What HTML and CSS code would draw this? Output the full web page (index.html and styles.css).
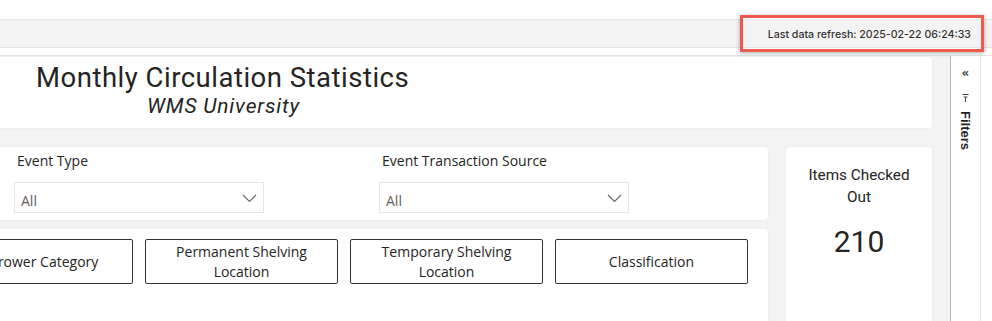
FILE: index.html
```html
<!DOCTYPE html>
<html>
<head>
  <title>Monthly Circulation Statistics</title>
  <link rel="stylesheet" href="styles.css">
</head>
<body>
  <div class="top-space"></div>

  <div class="refresh-bar">
    <div class="refresh-box">
      <span class="refresh-text">Last data refresh: 2025-02-22 06:24:33</span>
    </div>
  </div>

  <div class="workspace">
    <div class="canvas">
      <div class="card title-card">
        <h1 class="report-title">Monthly Circulation Statistics</h1>
        <p class="report-subtitle">WMS University</p>
      </div>

      <div class="canvas-row">
        <div class="left-col">
          <div class="card slicer-card">
            <div class="slicer">
              <div class="slicer-label">Event Type</div>
              <div class="dropdown">
                <span>All</span>
                <svg class="chevron" width="15" height="9" viewBox="0 0 15 9">
                  <path d="M1 1 L7.5 7.5 L14 1" fill="none" stroke="#666" stroke-width="1.1"/>
                </svg>
              </div>
            </div>
            <div class="slicer">
              <div class="slicer-label">Event Transaction Source</div>
              <div class="dropdown">
                <span>All</span>
                <svg class="chevron" width="15" height="9" viewBox="0 0 15 9">
                  <path d="M1 1 L7.5 7.5 L14 1" fill="none" stroke="#666" stroke-width="1.1"/>
                </svg>
              </div>
            </div>
          </div>

          <div class="card button-card">
            <button class="nav-button first">Borrower Category</button>
            <button class="nav-button">Permanent Shelving Location</button>
            <button class="nav-button">Temporary Shelving Location</button>
            <button class="nav-button">Classification</button>
          </div>
        </div>

        <div class="card kpi-card">
          <div class="kpi-label">Items Checked Out</div>
          <div class="kpi-value">210</div>
        </div>
      </div>
    </div>

    <div class="filters-pane">
      <div class="collapse-icon">&laquo;</div>
      <svg class="filter-icon" width="7" height="8" viewBox="0 0 7 8">
        <path d="M0.5 0.5 H6.5 M1.5 3 H5.5 M3.5 3 V8" stroke="#444" stroke-width="1"/>
      </svg>
      <div class="filters-label">Filters</div>
    </div>
  </div>
</body>
</html>
```

FILE: styles.css
```css
body {
  margin: 0;
  width: 992px;
  height: 321px;
  overflow: hidden;
  background-color: #fff;
  font-family: "Open Sans", "Noto Sans", sans-serif;
  color: #252423;
}

.top-space {
  height: 19px;
}

.refresh-bar {
  position: relative;
  height: 27px;
  background-color: #f3f3f3;
  border-top: 1px solid #e3e6ea;
  border-bottom: 1px solid #e3e6ea;
}

/* red highlight drawn over the bar */
.refresh-box {
  position: absolute;
  left: 740px;
  top: -5px;
  width: 228px;
  height: 31px;
  border: 3px solid #ef5a4c;
  box-shadow: 0 1px 4px rgba(0, 0, 0, 0.35);
  display: flex;
  align-items: center;
  justify-content: flex-end;
  padding-right: 10px;
  box-sizing: content-box;
}

.refresh-text {
  font-family: Inter, "Liberation Sans", sans-serif;
  font-size: 10.6px;
  font-weight: 500;
  color: #333;
  padding-top: 1px;
}

.workspace {
  display: flex;
  margin-top: 7px;
  border-top: 1px solid #e1e4e8;
  height: 300px;
}

.canvas {
  width: 950px;
  background-color: #f3f3f3;
  padding-top: 1px;
  padding-right: 18px;
  box-sizing: border-box;
}

.card {
  background-color: #fff;
  border-radius: 4px;
  box-shadow: 0 0 4px rgba(0, 0, 0, 0.04);
}

.title-card {
  height: 71px;
  margin-left: -6px;
  padding-left: 42px;
  box-sizing: border-box;
}

.report-title {
  margin: 0;
  padding-top: 5px;
  font-family: Roboto, "DejaVu Sans", sans-serif;
  font-weight: 400;
  font-size: 27.5px;
  letter-spacing: 0.5px;
  line-height: 32px;
  color: #252423;
}

.report-subtitle {
  margin: 0 0 0 111px;
  font-family: Roboto, "DejaVu Sans", sans-serif;
  font-style: italic;
  font-size: 21px;
  letter-spacing: 0.8px;
  line-height: 24px;
  color: #252423;
}

.canvas-row {
  display: flex;
  gap: 18px;
  margin-top: 19px;
}

.left-col {
  width: 774px;
  margin-left: -6px;
  display: flex;
  flex-direction: column;
  gap: 9px;
}

.slicer-card {
  height: 73px;
  display: flex;
  gap: 115px;
  padding-left: 20px;
  box-sizing: border-box;
}

.slicer {
  width: 250px;
}

.slicer-label {
  font-size: 14px;
  line-height: 20px;
  padding: 4px 0 0 3px;
  color: #252423;
  font-weight: 500;
}

.dropdown {
  margin-top: 11px;
  height: 31px;
  border: 1px solid #e6e6e6;
  box-sizing: border-box;
  display: flex;
  align-items: center;
  justify-content: space-between;
  padding: 5px 6px 0 6px;
  font-size: 14px;
  color: #605e5c;
}

.chevron {
  margin-bottom: 4px;
}

.button-card {
  height: 120px;
  display: flex;
  gap: 12px;
  padding: 10px 0 0 0;
  box-sizing: border-box;
  align-items: flex-start;
  overflow: hidden;
}

.nav-button {
  width: 193px;
  height: 45px;
  flex-shrink: 0;
  background-color: #fff;
  border: 1px solid #333;
  border-radius: 2px;
  font-family: "Open Sans", "Noto Sans", sans-serif;
  font-size: 14px;
  line-height: 20px;
  color: #252423;
  padding: 1px 12px 0;
}

.nav-button.first {
  margin-left: -54px;
}

.kpi-card {
  width: 146px;
  height: 200px;
  text-align: center;
  font-family: Roboto, "DejaVu Sans", sans-serif;
}

.kpi-label {
  font-size: 15.3px;
  line-height: 22px;
  padding: 17px 10px 0;
  color: #252423;
}

.kpi-value {
  font-size: 30px;
  line-height: 34px;
  margin-top: 17px;
  color: #252423;
}

.filters-pane {
  width: 29px;
  border-left: 1px solid #b8b8b8;
  border-right: 1px solid #e6e6e6;
  background-color: #fff;
  display: flex;
  flex-direction: column;
  align-items: center;
}

.collapse-icon {
  margin-top: 10px;
  font-family: "DejaVu Sans", sans-serif;
  font-size: 12px;
  font-weight: bold;
  line-height: 14px;
  color: #444;
}

.filter-icon {
  margin-top: 14px;
}

.filters-label {
  margin-top: 9px;
  writing-mode: vertical-rl;
  font-family: "Liberation Sans", Arial, sans-serif;
  font-size: 13px;
  font-weight: bold;
  color: #252423;
}
```
